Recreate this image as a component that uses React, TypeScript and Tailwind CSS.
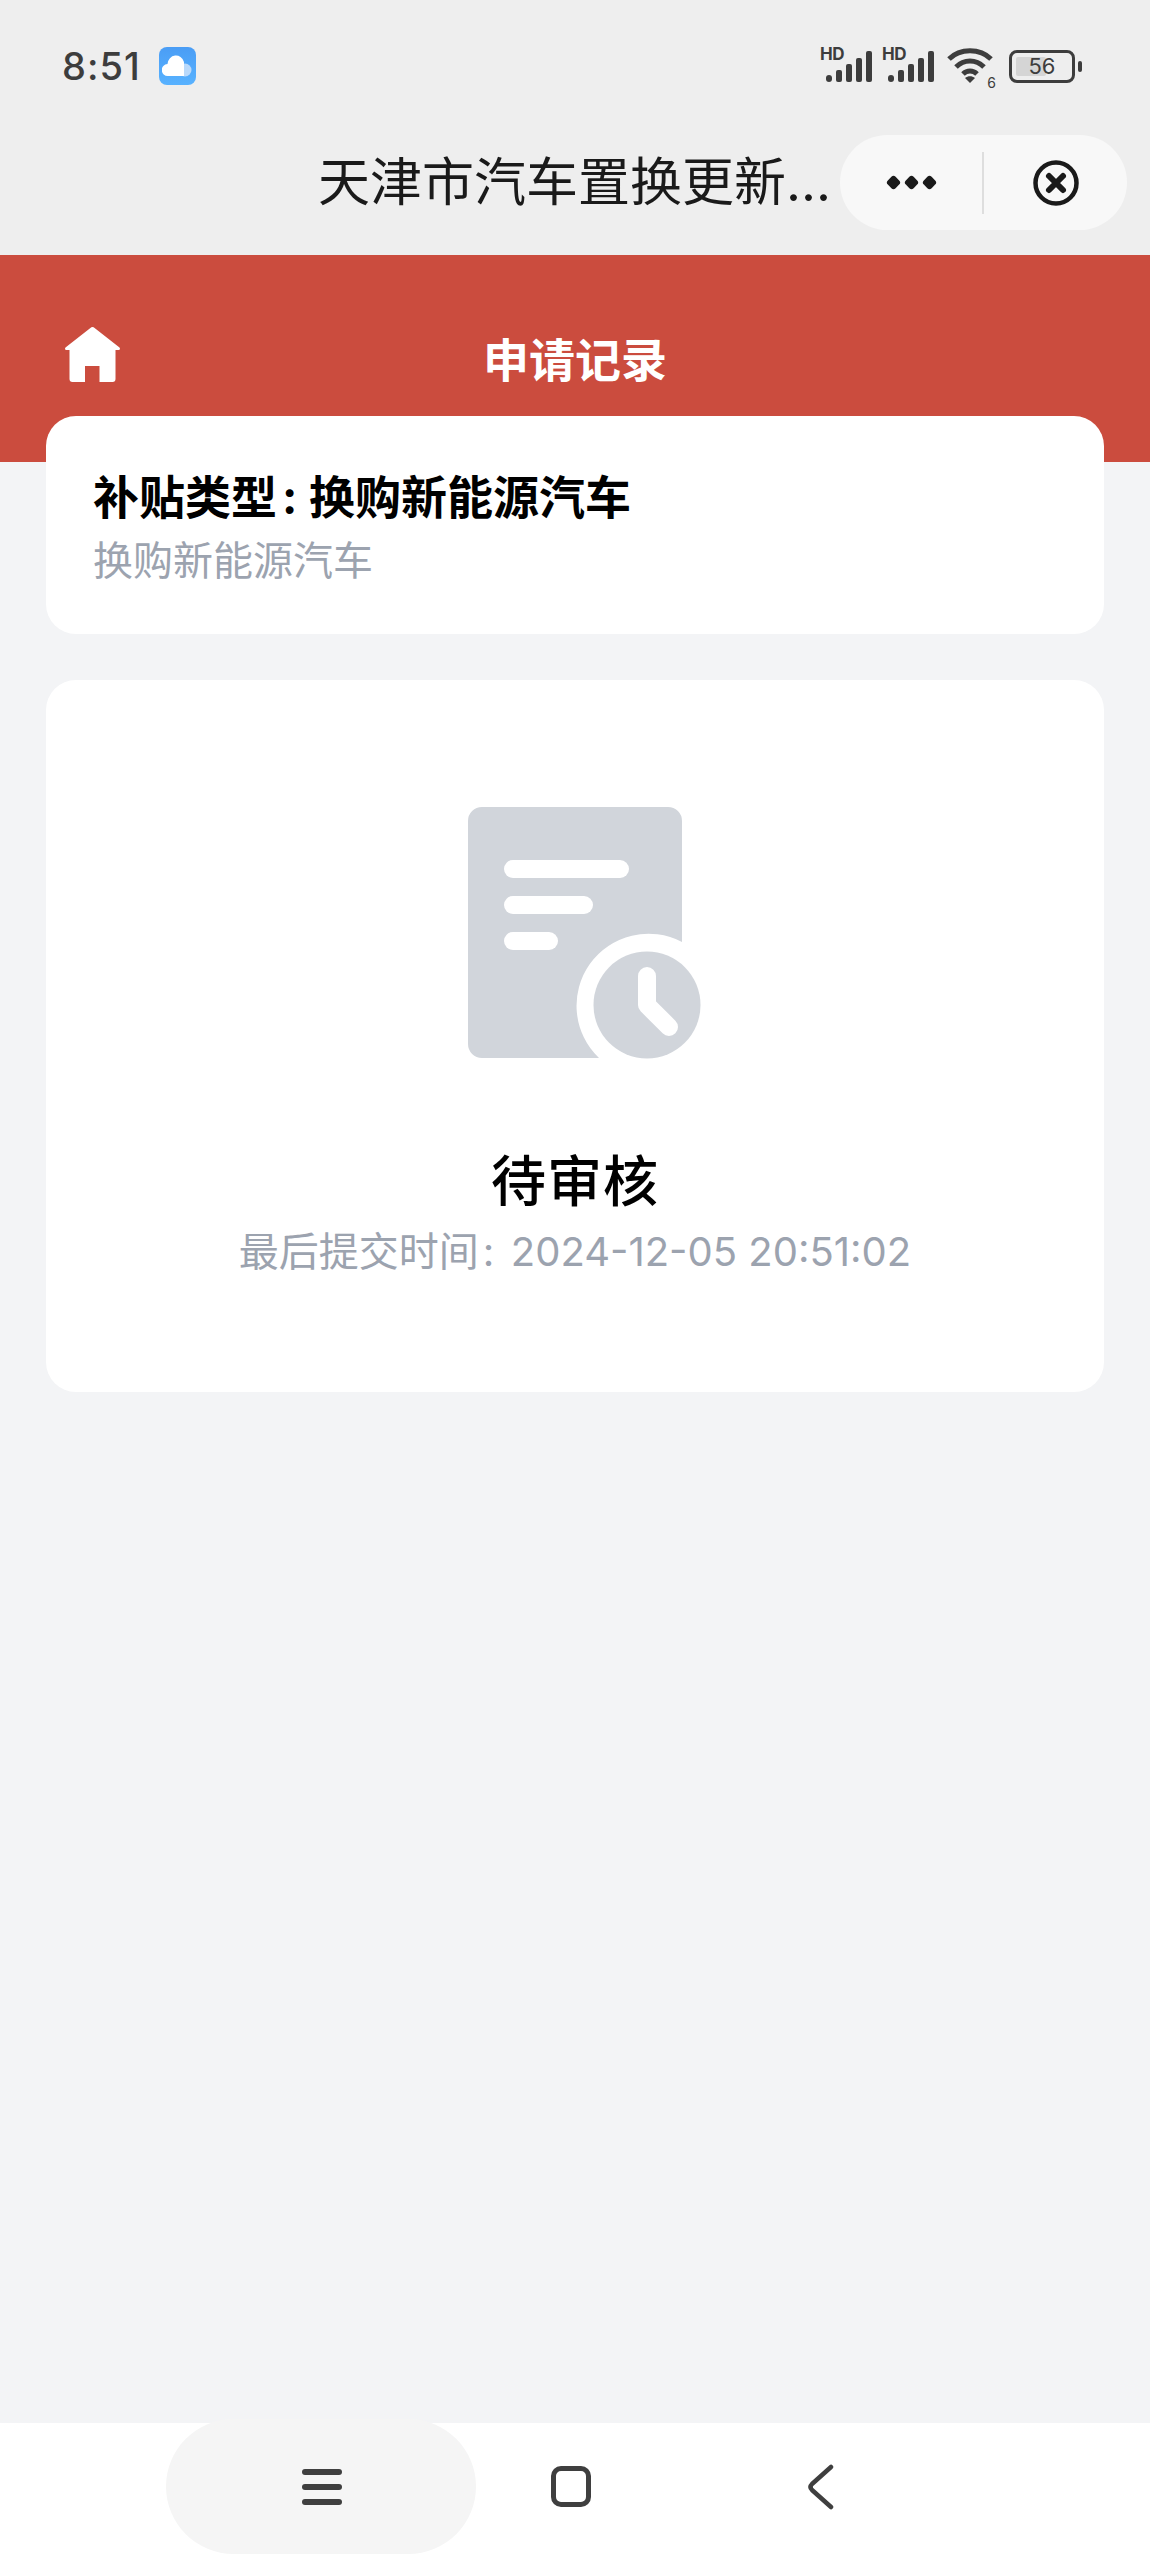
import React from 'react'

const font = { fontFamily: '"Inter", "Noto Sans CJK SC", sans-serif' }

function Signal() {
  return (
    <div className="relative w-[52px] h-[36px]">
      <span className="absolute left-0 top-[-2px] text-[17px] leading-[17px] font-bold tracking-[-0.5px] text-[#3d3d3d]">HD</span>
      <svg width="52" height="36" viewBox="0 0 52 36" className="absolute left-0 top-0" fill="#3d3d3d">
        <rect x="6" y="27" width="6" height="7" rx="3" />
        <rect x="16" y="22" width="6" height="12" rx="2" />
        <rect x="26" y="16" width="6" height="18" rx="2" />
        <rect x="36" y="10" width="6" height="24" rx="2" />
        <rect x="46" y="3" width="6" height="31" rx="2" />
      </svg>
    </div>
  )
}

function Wifi() {
  return (
    <div className="relative w-[50px] h-[40px]">
      <svg width="50" height="40" viewBox="0 0 50 40" fill="none" stroke="#3d3d3d" strokeWidth="5">
        <path d="M3 13 C14 2 34 2 45 13" />
        <path d="M10 21 C18 13 30 13 38 21" />
        <path d="M17 28 C21 24 27 24 31 28" />
        <path d="M24 37 L19 32 C22 29.5 26 29.5 29 32 Z" fill="#3d3d3d" stroke="none" />
      </svg>
      <span className="absolute right-0 bottom-[-4px] text-[14px] leading-[14px] text-[#3d3d3d]">6</span>
    </div>
  )
}

export default function App() {
  return (
    <div className="w-[1150px] h-[2559px] flex flex-col bg-[#f3f4f6] overflow-hidden" style={font}>
      {/* Status + mini program bar */}
      <div className="h-[255px] bg-[#eeeeee] shrink-0">
        <div className="h-[46px]" />
        <div className="flex items-center h-[40px] pl-[62px] pr-[68px]">
          <span className="text-[38px] leading-[40px] font-medium text-[#3d3d3d] tracking-[1px]">8:51</span>
          <div className="ml-[18px] w-[37px] h-[38px] rounded-[8px] bg-gradient-to-b from-[#4a9df5] to-[#58b2ff] flex items-center justify-center">
            <svg width="30" height="26" viewBox="0 0 30 26">
              <circle cx="23" cy="17" r="6.5" fill="#b9d9fb" />
              <path d="M6 23 a6 6 0 0 1 -.5 -12 a8.5 9.5 0 0 1 16.5 -2 V23 Z" fill="#ffffff" />
            </svg>
          </div>
          <div className="ml-auto flex items-center">
            <Signal />
            <div className="w-[10px]" />
            <Signal />
            <div className="w-[12px]" />
            <Wifi />
            <div className="ml-[13px] relative w-[66px] h-[33px] rounded-[8px] border-[3px] border-[#3d3d3d] flex items-center justify-center">
              <span className="absolute left-[4px] top-[4px] bottom-[4px] w-[30px] rounded-[2px] bg-[#d5d5d5]" />
              <span className="relative text-[22px] leading-[22px] text-[#3d3d3d]">56</span>
            </div>
            <div className="ml-[3px] w-[4px] h-[11px] rounded-full bg-[#3d3d3d]" />
          </div>
        </div>
        <div className="flex items-center mt-[49px] h-[95px] pl-[318px] pr-[23px]">
          <span className="text-[52px] leading-[60px] text-[#1a1a1a] whitespace-nowrap">天津市汽车置换更新...</span>
          <div className="ml-auto w-[287px] h-[95px] rounded-full bg-[#f8f8f8] flex items-center">
            <div className="w-[142px] flex justify-center gap-[7px]">
              <span className="w-[11px] h-[11px] rotate-45 rounded-[3px] bg-[#1a1a1a]" />
              <span className="w-[11px] h-[11px] rotate-45 rounded-[3px] bg-[#1a1a1a]" />
              <span className="w-[11px] h-[11px] rotate-45 rounded-[3px] bg-[#1a1a1a]" />
            </div>
            <div className="w-[2px] h-[62px] bg-[#dedede]" />
            <div className="flex-1 flex justify-center">
              <svg width="46" height="46" viewBox="0 0 46 46" fill="none" stroke="#1a1a1a">
                <circle cx="23" cy="23" r="20.5" strokeWidth="4.5" />
                <path d="M16 16 L30 30 M30 16 L16 30" strokeWidth="6" strokeLinecap="round" />
              </svg>
            </div>
          </div>
        </div>
      </div>

      {/* Red header */}
      <div className="h-[207px] bg-[#cb4c3e] shrink-0 relative">
        <div className="flex items-center justify-center pt-[75px] h-[134px]">
          <span className="text-[46px] leading-[56px] font-bold text-white">申请记录</span>
        </div>
        <svg className="absolute left-[65px] top-[72px]" width="55" height="55" viewBox="0 0 55 55" fill="#ffffff">
          <path d="M27.5 0 C28.3 0 29 .4 29.6 1 L54.5 20.5 C55.5 21.8 55 23 53 23 H50.5 V52 C50.5 54 49.5 55 47.5 55 H34.5 V39 H20 V55 H7.5 C5.5 55 4.5 54 4.5 52 V23 H2 C0 23 -.5 21.8 .5 20.5 L25.4 1 C26 .4 26.7 0 27.5 0 Z" />
        </svg>
      </div>

      {/* Content */}
      <div className="flex-1 px-[46px] -mt-[46px] relative">
        <div className="h-[218px] rounded-[30px] bg-white pl-[47px] pt-[52px]">
          <div className="text-[46px] leading-[58px] font-bold text-black whitespace-nowrap">
            补贴类型<span className="inline-block w-[32px] pl-[5px] text-left">:</span>换购新能源汽车
          </div>
          <div className="text-[40px] leading-[50px] mt-[10px] text-[#9ca3af] whitespace-nowrap">换购新能源汽车</div>
        </div>

        <div className="mt-[46px] h-[712px] rounded-[30px] bg-white flex flex-col items-center pt-[127px]">
          <svg width="234" height="252" viewBox="0 0 234 252" className="ml-[19px]">
            <path
              d="M14 0 H200 A14 14 0 0 1 214 14 V135 A72 72 0 0 0 131 251 H14 A14 14 0 0 1 0 237 V14 A14 14 0 0 1 14 0 Z"
              fill="#d1d5db"
            />
            <rect x="36" y="53" width="125" height="18" rx="9" fill="#ffffff" />
            <rect x="36" y="89" width="89" height="18" rx="9" fill="#ffffff" />
            <rect x="36" y="125" width="54" height="18" rx="9" fill="#ffffff" />
            <circle cx="179" cy="198" r="53.5" fill="#d1d5db" />
            <path d="M179 169 V198 L201 220" fill="none" stroke="#ffffff" strokeWidth="18" strokeLinecap="round" strokeLinejoin="round" />
          </svg>
          <div className="mt-[92px] text-[55px] leading-[60px] font-medium tracking-[1px] text-black">待审核</div>
          <div className="mt-[16px] text-[40px] leading-[50px] text-[#9ca3af] whitespace-nowrap">
            最后提交时间<span className="inline-block w-[32px] pl-[4px] text-left">:</span>2024-12-05 20:51:02
          </div>
        </div>
      </div>

      {/* Android nav */}
      <div className="h-[136px] bg-white shrink-0 relative flex">
        <div className="ml-[166px] -mt-[4px] w-[310px] h-[135px] rounded-[68px] bg-[#f5f5f5] flex items-center justify-center">
          <div className="flex flex-col gap-[9px] ml-[2px]">
            <span className="w-[40px] h-[6px] rounded-full bg-[#3f3f3f]" />
            <span className="w-[40px] h-[6px] rounded-full bg-[#3f3f3f]" />
            <span className="w-[40px] h-[6px] rounded-full bg-[#3f3f3f]" />
          </div>
        </div>
        <div className="ml-[75px] mt-[43px] w-[40px] h-[41px] rounded-[10px] border-[5px] border-[#3f3f3f]" />
        <svg className="ml-[214px] mt-[41px]" width="32" height="46" viewBox="0 0 32 46" fill="none" stroke="#3f3f3f" strokeWidth="4.5" strokeLinecap="round" strokeLinejoin="round">
          <path d="M26 3 L7 20 Q4 23 7 26 L26 43" />
        </svg>
      </div>
    </div>
  )
}
